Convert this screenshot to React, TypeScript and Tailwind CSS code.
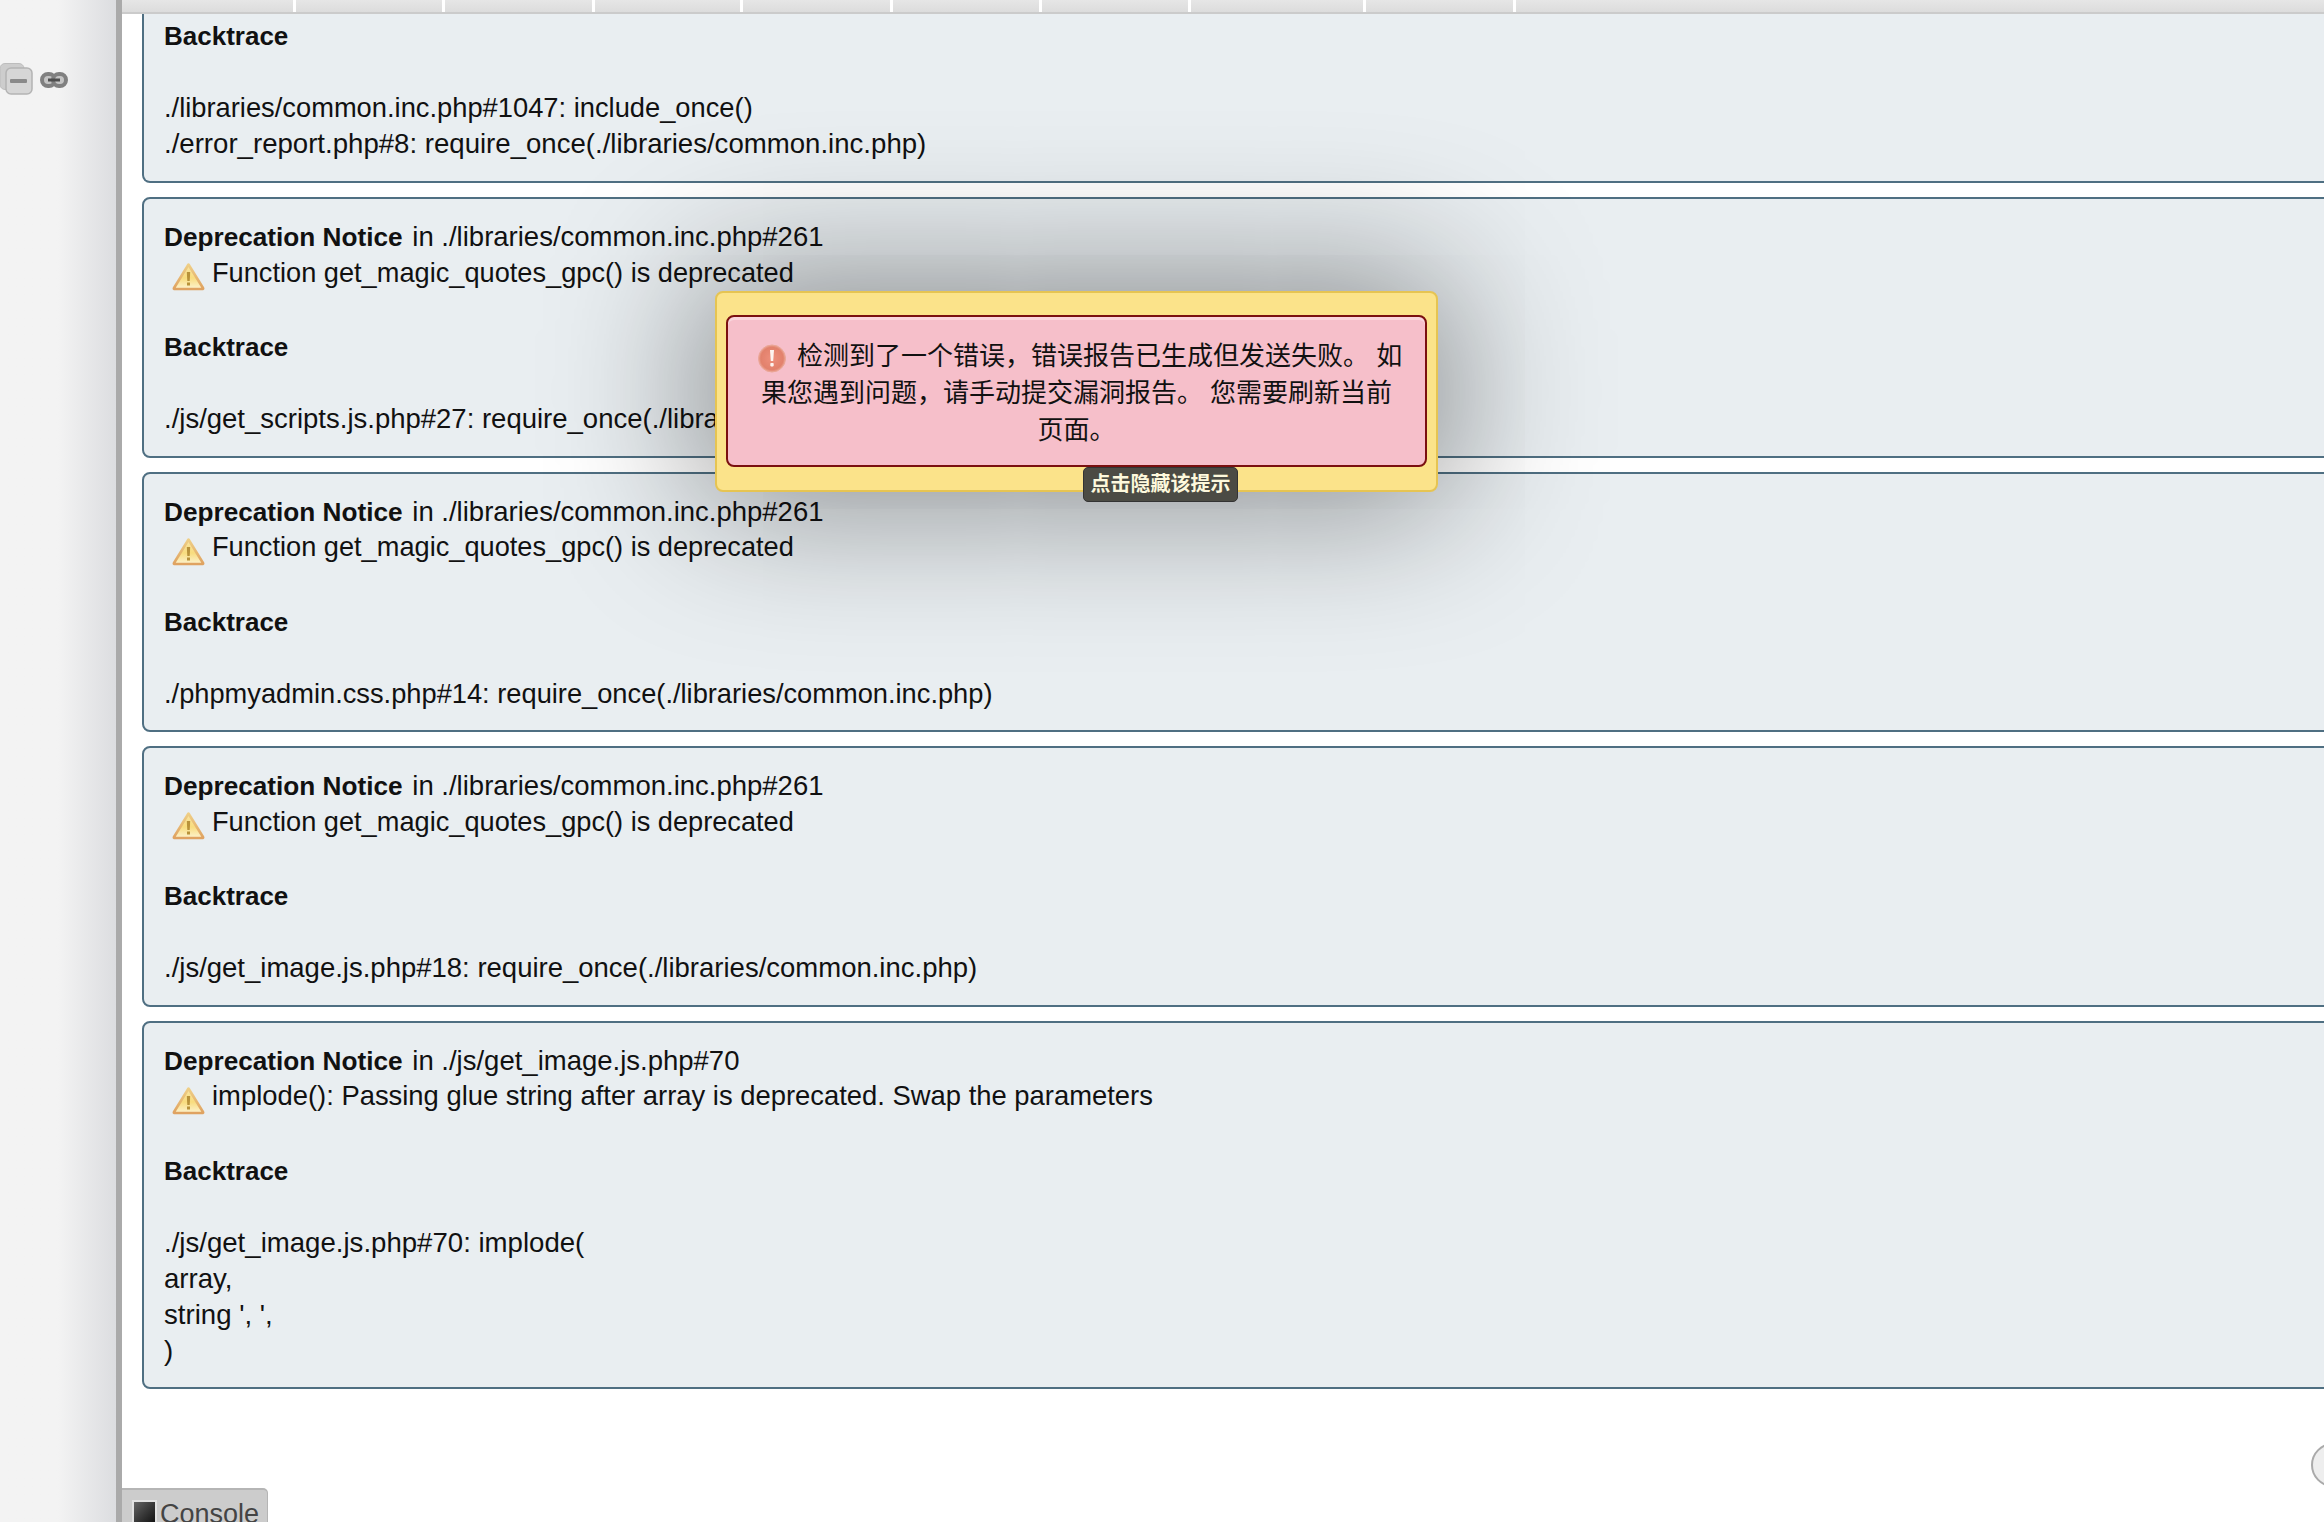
const tabs = ['w-[174px]', 'w-[149px]', 'w-[150px]', 'w-[148px]', 'w-[150px]', 'w-[149px]', 'w-[149px]', 'w-[175px]', 'w-[150px]'];

const cards = [
  {
    where: './libraries/common.inc.php#261',
    message: 'Function get_magic_quotes_gpc() is deprecated',
    trace: ['./js/get_scripts.js.php#27: require_once(./libraries/common.inc.php)'],
  },
  {
    where: './libraries/common.inc.php#261',
    message: 'Function get_magic_quotes_gpc() is deprecated',
    trace: ['./phpmyadmin.css.php#14: require_once(./libraries/common.inc.php)'],
    traceSize: 'text-[27.25px]',
  },
  {
    where: './libraries/common.inc.php#261',
    message: 'Function get_magic_quotes_gpc() is deprecated',
    trace: ['./js/get_image.js.php#18: require_once(./libraries/common.inc.php)'],
  },
  {
    where: './js/get_image.js.php#70',
    message: 'implode(): Passing glue string after array is deprecated. Swap the parameters',
    trace: ['./js/get_image.js.php#70: implode(', 'array,', "string ', ',", ')'],
    messageSize: 'text-[27.4px]',
    traceSize: 'text-[27.6px]',
  },
];

function WarningIcon() {
  return (
    <svg width="33" height="29" viewBox="0 0 33 29" className="ml-[8px] mr-[7px] mt-[5px] shrink-0 blur-[0.4px]">
      <defs>
        <linearGradient id="warnFill" x1="0" y1="0" x2="0" y2="1">
          <stop offset="0" stopColor="#f9e6a6" />
          <stop offset="0.55" stopColor="#f8dc7e" />
          <stop offset="1" stopColor="#fdf3cf" />
        </linearGradient>
        <linearGradient id="warnEdge" x1="0" y1="0" x2="0" y2="1">
          <stop offset="0" stopColor="#efcf86" />
          <stop offset="1" stopColor="#dfa261" />
        </linearGradient>
      </defs>
      <path d="M16.5 2.5 L31 26 Q31.5 27 30 27 L3 27 Q1.5 27 2 26 Z" fill="url(#warnFill)" stroke="url(#warnEdge)" strokeWidth="2.6" strokeLinejoin="round" />
      <path d="M14.8 10 h3.4 l-0.5 9 h-2.4 Z" fill="#b8923a" />
      <rect x="15" y="20.5" width="3" height="3" fill="#b8923a" />
    </svg>
  );
}

function ErrorIcon() {
  return (
    <svg width="28" height="29" viewBox="0 0 28 29" className="ml-[7px] mr-[4px] inline-block align-[-8px] blur-[0.3px]">
      <defs>
        <radialGradient id="errFill" cx="0.5" cy="0.5" r="0.55">
          <stop offset="0" stopColor="#ee8f7c" />
          <stop offset="0.75" stopColor="#e2816c" />
          <stop offset="1" stopColor="#f0b4a4" />
        </radialGradient>
      </defs>
      <circle cx="14" cy="14.5" r="13.5" fill="url(#errFill)" stroke="#e9a595" strokeWidth="1" />
      <path d="M12 6 h4 l-0.8 11 h-2.4 Z" fill="#fdf3ef" />
      <rect x="12.3" y="19" width="3.4" height="3.4" rx="0.8" fill="#fdf3ef" />
    </svg>
  );
}

function SidebarIcons() {
  return (
    <div className="flex items-center pt-[63px]">
      <svg width="33" height="32" viewBox="0 0 33 32" className="shrink-0 blur-[0.4px]">
        <rect x="0" y="0.5" width="24" height="26" rx="5" fill="#cdcdcd" stroke="#bdbdbd" />
        <rect x="6" y="5" width="26" height="26" rx="5" fill="#d6d6d6" stroke="#b4b4b4" strokeWidth="1.5" />
        <rect x="10" y="16" width="17" height="4" rx="1" fill="#8a8a8a" />
      </svg>
      <svg width="28" height="16" viewBox="0 0 28 16" className="ml-[7px] mt-[2px] shrink-0 blur-[0.5px]">
        <rect x="2" y="2" width="13" height="12" rx="6" fill="#c4c4c4" stroke="#808080" strokeWidth="4" />
        <rect x="13" y="2" width="13" height="12" rx="6" fill="#c4c4c4" stroke="#808080" strokeWidth="4" />
        <rect x="8" y="6.5" width="12" height="3" fill="#4e4e4e" />
      </svg>
    </div>
  );
}

function Card({
  where,
  message,
  trace,
  messageSize = 'text-[27.2px]',
  traceSize = 'text-[27.5px]',
}: {
  where: string;
  message: string;
  trace: string[];
  messageSize?: string;
  traceSize?: string;
}) {
  return (
    <div className="w-[2300px] rounded-[8px] border-2 border-[#4f6f82] bg-[#e9eef1] pl-[20px] pt-[20px] pb-[18.5px] mb-[14px] text-[27.5px]">
      <div className="h-[36px]">
        <b className="mr-[2px] text-[26.2px]">Deprecation Notice</b> in {where}
      </div>
      <div className="flex h-[38px] items-center">
        <WarningIcon />
        <span className={`mt-[-3px] ${messageSize}`}>{message}</span>
      </div>
      <div className="h-[36px]" />
      <div className="h-[36px] text-[26px] font-bold">Backtrace</div>
      <div className="h-[36px]" />
      {trace.map((line) => (
        <div key={line} className={`h-[36px] ${traceSize}`}>
          {line}
        </div>
      ))}
    </div>
  );
}

export default function App() {
  return (
    <div className="flex h-[1522px] w-[2324px] overflow-hidden bg-white font-['Liberation_Sans','Noto_Sans_CJK_SC',sans-serif] text-[26px] leading-[36px] text-[#111]">
      <div className="w-[116px] shrink-0 bg-gradient-to-r from-[#f3f3f3] from-50% to-[#dcdde0]">
        <SidebarIcons />
      </div>
      <div className="w-[6px] shrink-0 bg-[#aaaaaa]" />

      <div className="relative flex-1 overflow-hidden">
        <div className="flex h-[14px] border-b-2 border-[#cbcbcb] bg-gradient-to-b from-[#e6e6e6] to-[#dcdcdc]">
          {tabs.map((w, i) => (
            <div key={i} className={`${w} shrink-0 border-r-[3px] border-white`} />
          ))}
        </div>

        <div className="pl-[20px]">
          <div className="w-[2300px] rounded-b-[8px] border-2 border-t-0 border-[#4f6f82] bg-[#e9eef1] pl-[20px] pt-[4px] pb-[19px] mb-[14px] text-[27.5px]">
            <div className="h-[36px] text-[26px] font-bold">Backtrace</div>
            <div className="h-[36px]" />
            <div className="h-[36px] text-[27.3px]">./libraries/common.inc.php#1047: include_once()</div>
            <div className="h-[36px] text-[27.6px]">./error_report.php#8: require_once(./libraries/common.inc.php)</div>
          </div>
          {cards.map((c, i) => (
            <Card key={i} {...c} />
          ))}
        </div>

        <div className="absolute bottom-0 left-0 flex h-[34px] w-[146px] items-start rounded-tr-[5px] border-t-2 border-r border-[#b5b5b5] bg-[#cccccc] pl-[10px] pt-[10px] font-['Liberation_Sans',sans-serif] text-[27px] leading-[28px] text-[#444]">
          <div className="h-[24px] w-[25px] shrink-0 border-2 border-b-0 border-[#e2e2e2] bg-gradient-to-br from-[#666] to-[#111]" />
          <span className="ml-[3px]">Console</span>
        </div>

        <div className="absolute left-[2189px] top-[1443px] h-[44px] w-[44px] rounded-full border-2 border-[#aaaaaa] bg-[#eeeeee]" />

        <div className="absolute left-[593px] top-[291px] h-[201px] w-[723px] rounded-[8px] border-2 border-[#e6c452] bg-[#fbe38a] px-[9px] pt-[22px] shadow-[0_0_150px_15px_rgba(0,0,0,0.42)]">
          <div className="h-[152px] rounded-[8px] border-2 border-[#7a1010] bg-[#f6bfca] px-[20px] pt-[21px] text-center leading-[37px] text-[#111] shadow-[inset_0_3px_0_rgba(255,255,255,0.35)]">
            <ErrorIcon /> 检测到了一个错误，错误报告已生成但发送失败。 如果您遇到问题，请手动提交漏洞报告。 您需要刷新当前页面。
          </div>
          <div className="absolute left-[366px] top-[174px] h-[35px] w-[155px] rounded-[5px] border border-[#333] bg-[#4b4b44] text-center text-[20px] font-bold leading-[33px] text-[#fdf8dc]">
            点击隐藏该提示
          </div>
        </div>
      </div>
    </div>
  );
}
